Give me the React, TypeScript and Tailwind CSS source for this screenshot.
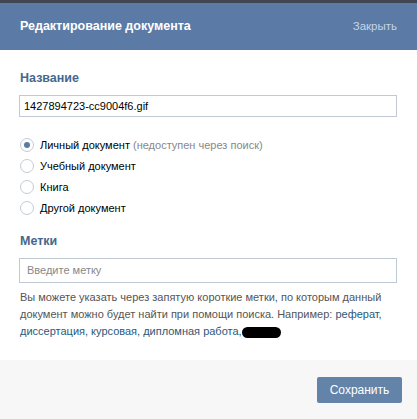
import React from 'react';

const options = [
  { label: 'Личный документ', note: '(недоступен через поиск)', checked: true },
  { label: 'Учебный документ', checked: false },
  { label: 'Книга', checked: false },
  { label: 'Другой документ', checked: false },
];

const Radio = ({ checked }: { checked: boolean }) => (
  <span className="w-[14px] h-[14px] rounded-full border border-[#c3cbd4] bg-white flex items-center justify-center shrink-0">
    {checked && <span className="w-[6px] h-[6px] rounded-full bg-[#5b7ca6]" />}
  </span>
);

export default function App() {
  return (
    <div className="w-[417px] h-[419px] flex flex-col bg-white text-[11px] text-black" style={{ fontFamily: '"Liberation Sans", Arial, sans-serif' }}>
      <div className="h-[3px] bg-[#404652]" />
      <div className="h-[47px] bg-[#5b7ba6] flex items-center justify-between pl-[20px] pr-[20px]">
        <span className="text-white font-bold text-[12.5px]">Редактирование документа</span>
        <span className="text-[#c5d5e8] text-[11.5px]">Закрыть</span>
      </div>

      <div className="flex-1 px-[19px] pt-[20px]">
        <div className="text-[#45688e] font-bold text-[12.5px] leading-[17px] pl-[1px]">Название</div>
        <div className="mt-[8px] h-[22px] w-[378px] border border-[#c0cad5] flex items-center px-[4px]">
          1427894723-cc9004f6.gif
        </div>

        <div className="mt-[21px] flex flex-col gap-[7px] pl-[1px]">
          {options.map((o) => (
            <div key={o.label} className="flex items-center gap-[6px] h-[14px] leading-[14px]">
              <Radio checked={o.checked} />
              <span>
                {o.label}
                {o.note && <span className="text-[#888]"> {o.note}</span>}
              </span>
            </div>
          ))}
        </div>

        <div className="mt-[18px] text-[#45688e] font-bold text-[12.5px] leading-[17px] pl-[1px]">Метки</div>
        <div className="mt-[8px] h-[25px] w-[378px] border border-[#c0cad5] flex items-center px-[7px] text-[#888]">
          Введите метку
        </div>

        <p className="mt-[6px] text-[#555] leading-[17px] pl-[1px]">
          Вы можете указать через запятую короткие метки, по которым данный документ можно будет найти при помощи поиска. Например:{' '}
          <span className="text-[#2b587a]">реферат, диссертация, курсовая, дипломная работа,</span>
          <span className="inline-block align-middle w-[39px] h-[11px] rounded-full bg-black" />
        </p>
      </div>

      <div className="h-[59px] bg-[#f7f7f7] flex items-center justify-end pr-[15px]">
        <button className="w-[85px] h-[26px] bg-[#6383a8] rounded-[2px] text-white text-[12px]">Сохранить</button>
      </div>
    </div>
  );
}
